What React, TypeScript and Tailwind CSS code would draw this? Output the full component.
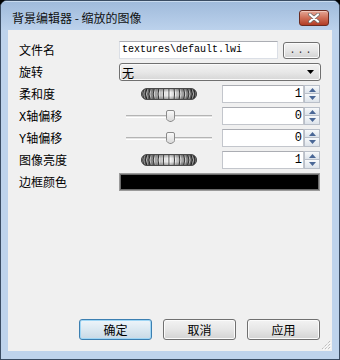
import React from "react";

function Jog() {
  const W = 56;
  const H = 12;
  const n = 16;
  const ridges: React.ReactNode[] = [];
  for (let i = 1; i < n; i++) {
    const t = -Math.PI / 2 + (Math.PI * i) / n;
    const s = Math.sin(t);
    const x = W / 2 + (W / 2 - 1.5) * s;
    const cx = x + 3.6 * s;
    ridges.push(
      <g key={i}>
        <path d={`M${x} 0.5 Q${cx} ${H / 2} ${x} ${H - 0.5}`} stroke="#222" strokeWidth="1" fill="none" opacity={0.85} />
        <path d={`M${x + 1} 0.5 Q${cx + 1} ${H / 2} ${x + 1} ${H - 0.5}`} stroke="#ffffff" strokeWidth="0.9" fill="none" opacity={0.65} />
      </g>
    );
  }
  return (
    <svg width={W} height={H} viewBox={`0 0 ${W} ${H}`}>
      <defs>
        <linearGradient id="jg" x1="0" y1="0" x2="1" y2="0">
          <stop offset="0" stopColor="#2c2c2c" />
          <stop offset="0.18" stopColor="#858585" />
          <stop offset="0.5" stopColor="#f6f6f6" />
          <stop offset="0.82" stopColor="#858585" />
          <stop offset="1" stopColor="#2c2c2c" />
        </linearGradient>
        <linearGradient id="jv" x1="0" y1="0" x2="0" y2="1">
          <stop offset="0" stopColor="#000" stopOpacity="0.4" />
          <stop offset="0.35" stopColor="#000" stopOpacity="0" />
          <stop offset="0.65" stopColor="#000" stopOpacity="0" />
          <stop offset="1" stopColor="#000" stopOpacity="0.4" />
        </linearGradient>
        <clipPath id="jc">
          <rect x="0.5" y="0.5" width={W - 1} height={H - 1} rx="5.5" ry="5.5" />
        </clipPath>
      </defs>
      <g clipPath="url(#jc)">
        <rect x="0" y="0" width={W} height={H} fill="url(#jg)" />
        {ridges}
        <rect x="0" y="0" width={W} height={H} fill="url(#jv)" />
      </g>
      <rect x="0.5" y="0.5" width={W - 1} height={H - 1} rx="5.5" ry="5.5" fill="none" stroke="#4a4a4a" strokeWidth="1" />
    </svg>
  );
}

function Slider() {
  return (
    <div className="relative w-[86px] h-[12px] flex items-center">
      <div className="w-full h-[3px] border-t border-t-[#b4b4b4] border-b border-b-white bg-[#e4e4e4]" />
      <svg className="absolute left-[40px] top-0" width="9" height="12" viewBox="0 0 9 12">
        <defs>
          <linearGradient id="tg" x1="0" y1="0" x2="0" y2="1">
            <stop offset="0" stopColor="#fbfbfb" />
            <stop offset="1" stopColor="#d8d8d8" />
          </linearGradient>
        </defs>
        <path d="M2 0.5 H7 Q8.5 0.5 8.5 2 V8.5 Q8.5 9.5 7.5 10.3 L5.2 11.5 H3.8 L1.5 10.3 Q0.5 9.5 0.5 8.5 V2 Q0.5 0.5 2 0.5 Z" fill="url(#tg)" stroke="#8b8b8b" strokeWidth="1" />
      </svg>
    </div>
  );
}

function Spin({ v }: { v: string }) {
  return (
    <div className="flex h-[18px] w-[98px]">
      <div className="w-[82px] h-full bg-white border border-[#c3c6cc] border-t-[#abadb3] flex items-center justify-end pr-[1px] text-[12px] leading-none text-black font-['Liberation_Mono',monospace]">
        {v}
      </div>
      <div className="w-[16px] h-full flex flex-col">
        <div className="h-[9px] border border-[#b9bfc9] bg-gradient-to-b from-[#f7f9fb] to-[#dde3ea] flex items-center justify-center">
          <svg width="7" height="4" viewBox="0 0 7 4"><path d="M3.5 0 L7 4 H0 Z" fill="#4a6796" /></svg>
        </div>
        <div className="h-[9px] border border-t-0 border-[#b9bfc9] bg-gradient-to-b from-[#f7f9fb] to-[#dde3ea] flex items-center justify-center">
          <svg width="7" height="4" viewBox="0 0 7 4"><path d="M0 0 H7 L3.5 4 Z" fill="#4a6796" /></svg>
        </div>
      </div>
    </div>
  );
}

function Label({ children }: { children: React.ReactNode }) {
  return (
    <div className="h-[18px] flex items-center pt-[3px] text-[12px] leading-none text-black font-['Liberation_Mono','Noto_Sans_CJK_SC',monospace]">
      {children}
    </div>
  );
}

function Btn({ children, primary }: { children: React.ReactNode; primary?: boolean }) {
  return (
    <div
      className={
        primary
          ? "w-[73px] h-[21px] rounded-[3px] border border-[#3c7fb1] shadow-[inset_0_0_0_1px_#9fd6f5] bg-gradient-to-b from-[#eef5fa] via-[#dbe8f1] to-[#c9d9e5] flex items-center justify-center text-[12px] leading-none text-black font-['Noto_Sans_CJK_SC',sans-serif]"
          : "w-[73px] h-[21px] rounded-[3px] border border-[#707070] shadow-[inset_0_0_0_1px_#fbfbfb] bg-gradient-to-b from-[#f3f3f3] via-[#e6e6e6] to-[#d3d3d3] flex items-center justify-center text-[12px] leading-none text-black font-['Noto_Sans_CJK_SC',sans-serif]"
      }
    >
      {children}
    </div>
  );
}

export default function App() {
  return (
    <div className="w-[340px] h-[360px] bg-black">
      <div className="w-full h-full rounded-t-[7px] border border-[#3a4c63] bg-[#bed3ec] flex flex-col overflow-hidden">
        <div className="h-[29px] flex items-start bg-gradient-to-b from-[#9fbadb] to-[#bcd2ec] shadow-[inset_0_1px_0_#c9dbef]">
          <div className="pl-[11px] pt-[11px] text-[12px] leading-none text-[#111] font-['Noto_Sans_CJK_SC',sans-serif]">
            背景编辑器 - 缩放的图像
          </div>
          <div className="ml-auto mt-[9px] mr-[10px] w-[30px] h-[16px] rounded-[3px] border border-[#6a2b21] bg-gradient-to-b from-[#e4a797] via-[#cf6e57] to-[#b13c25] shadow-[inset_0_1px_0_#f1c6ba] flex items-center justify-center">
            <svg width="12" height="10" viewBox="0 0 12 10">
              <path d="M2 1.5 L10 8.5 M10 1.5 L2 8.5" stroke="#6b6b6b" strokeWidth="3.6" strokeLinecap="round" />
              <path d="M2 1.5 L10 8.5 M10 1.5 L2 8.5" stroke="#ffffff" strokeWidth="2.2" strokeLinecap="round" />
            </svg>
          </div>
        </div>
        <div className="relative mx-[7px] h-[321px] bg-[#f0f0f0] flex flex-col">
          <div className="pt-[11px] pl-[11px] grid grid-cols-[100px_201px] gap-y-[4px]">
            <Label>文件名</Label>
            <div className="flex h-[18px]">
              <div className="w-[159px] h-[18px] bg-white border border-[#dbdfe6] border-t-[#abadb3] flex items-center pl-[2px] text-[10px] leading-none text-black font-['Liberation_Mono',monospace]">
                textures\default.lwi
              </div>
              <div className="ml-[5px] mt-[1px] w-[37px] h-[17px] rounded-[3px] border border-[#707070] shadow-[inset_0_0_0_1px_#fbfbfb] bg-gradient-to-b from-[#f3f3f3] via-[#e6e6e6] to-[#d3d3d3] flex items-end justify-center pb-[2px] text-[10px] leading-none text-[#333] tracking-[2px] font-['Liberation_Mono',monospace]">
                ...
              </div>
            </div>

            <Label>旋转</Label>
            <div className="w-[202px] h-[18px] rounded-[3px] border border-[#707070] shadow-[inset_0_0_0_1px_#fafafa] bg-gradient-to-b from-[#f2f2f2] via-[#e8e8e8] to-[#d6d6d6] flex items-center pl-[2px] pr-[6px] text-[12px] leading-none text-black font-['Noto_Sans_CJK_SC',sans-serif]">
              <span className="pt-[1px]">无</span>
              <svg className="ml-auto" width="7" height="4" viewBox="0 0 7 4"><path d="M0 0 H7 L3.5 4 Z" fill="#000" /></svg>
            </div>

            <Label>柔和度</Label>
            <div className="flex">
              <div className="w-[99px] flex items-center justify-center"><Jog /></div>
              <div className="ml-[4px]"><Spin v="1" /></div>
            </div>

            <Label>X轴偏移</Label>
            <div className="flex">
              <div className="w-[99px] flex items-center justify-center"><Slider /></div>
              <div className="ml-[4px]"><Spin v="0" /></div>
            </div>

            <Label>Y轴偏移</Label>
            <div className="flex">
              <div className="w-[99px] flex items-center justify-center"><Slider /></div>
              <div className="ml-[4px]"><Spin v="0" /></div>
            </div>

            <Label>图像亮度</Label>
            <div className="flex">
              <div className="w-[99px] flex items-center justify-center"><Jog /></div>
              <div className="ml-[4px]"><Spin v="1" /></div>
            </div>

            <Label>边框颜色</Label>
            <div className="w-[201px] h-[18px] border border-[#9a9a9a] bg-black shadow-[inset_0_0_0_1px_#6a6a6a]" />
          </div>

          <div className="mt-auto pb-[11px] pr-[12px] flex justify-end gap-[11px]">
            <Btn primary>确定</Btn>
            <Btn>取消</Btn>
            <Btn>应用</Btn>
          </div>

          <svg className="absolute right-[1px] bottom-[1px]" width="11" height="11" viewBox="0 0 11 11">
            <path d="M10 2 L2 10 M10 5 L5 10 M10 8 L8 10" stroke="#a7a7a7" strokeWidth="1" strokeDasharray="1 1" />
            <path d="M11 3 L3 11 M11 6 L6 11 M11 9 L9 11" stroke="#ffffff" strokeWidth="1" strokeDasharray="1 1" />
          </svg>
        </div>
      </div>
    </div>
  );
}
